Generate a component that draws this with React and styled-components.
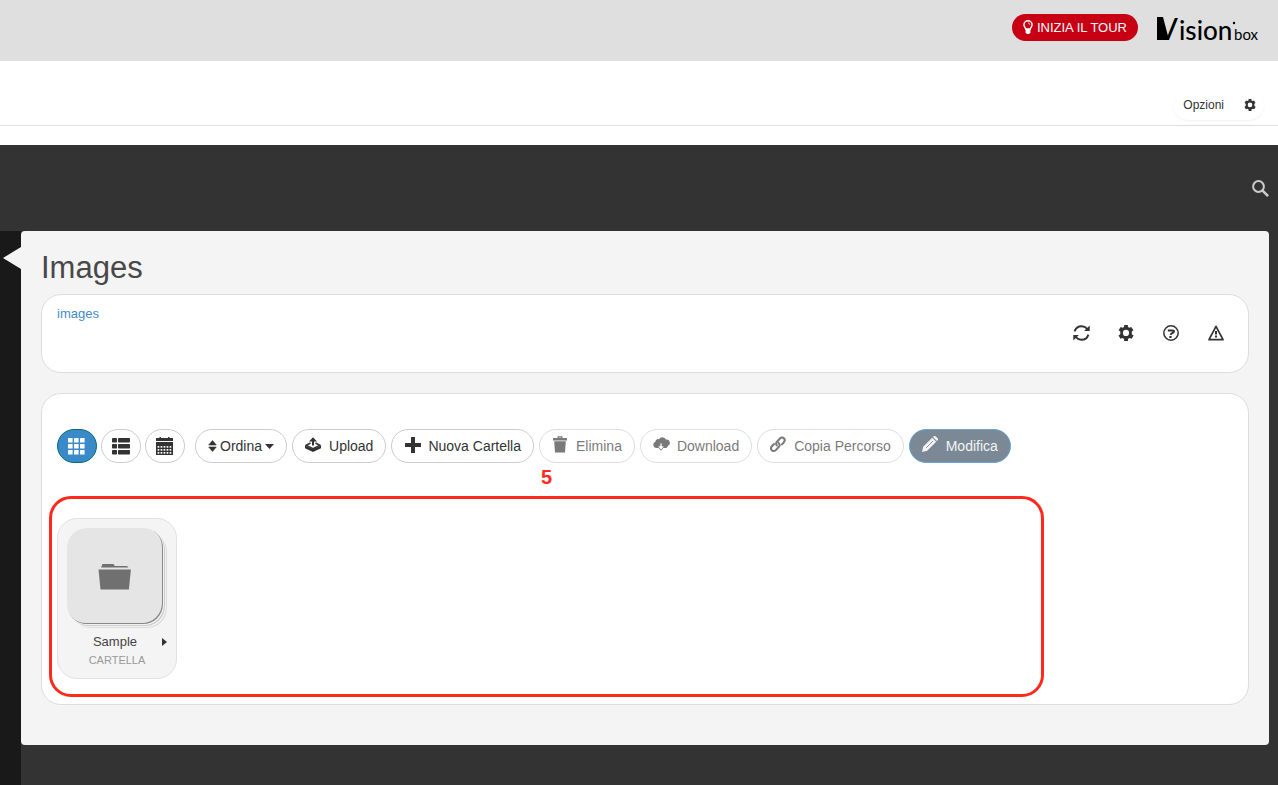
import React from 'react';
import styled, { createGlobalStyle } from 'styled-components';

const GlobalStyle = createGlobalStyle`
  * {
    box-sizing: border-box;
  }
  body {
    margin: 0;
    background: #333;
    font-family: "Liberation Sans", Arial, Helvetica, sans-serif;
    color: #333;
  }
`;

/* icons */

const Icon = ({ w = 18, h = 18, children }) => (
  <svg width={w} height={h} viewBox={`0 0 ${w} ${h}`} fill="currentColor" aria-hidden="true">
    {children}
  </svg>
);

const BulbIcon = () => (
  <Icon w={10} h={15}>
    <path d="M5 .7a4.1 4.1 0 0 0-4.1 4.1c0 1.7 1.6 2.6 1.8 4.4h4.6c.2-1.8 1.8-2.7 1.8-4.4A4.1 4.1 0 0 0 5 .7z" fill="none" stroke="currentColor" strokeWidth="1.4" />
    <path d="M5 3c1 0 1.8.7 1.8 1.6" fill="none" stroke="currentColor" strokeWidth=".9" />
    <path d="M2.6 8.6h4.8v3.6L6.2 14H3.8l-1.2-1.8z" />
  </Icon>
);

const GearIcon = ({ size = 16 }) => (
  <svg width={size} height={size} viewBox="0 0 16 16" fill="currentColor" aria-hidden="true">
    <path
      fillRule="evenodd"
      d="M6.1 0h3.8v1.9l1.6.9 1.8-.8 2.1 3.2-1.6 1.2v2.9l1.8 1.1-2 3.4-2-.8-1.6.9V16H6.1v-2.1l-1.6-.9-2 .8-2-3.4 1.8-1.1V6.4L.6 5.2 2.7 2l1.8.8 1.6-.9zM8 4.8a3.1 3.1 0 1 0 0 6.2 3.1 3.1 0 0 0 0-6.2z"
    />
  </svg>
);

const RefreshIcon = () => (
  <Icon w={17} h={16}>
    <path d="M1.6 6.4C2.6 3.3 5.2 1.2 8.5 1.2c2.3 0 4.3 1 5.6 2.6M15.4 9.6c-1 3.1-3.6 5.2-6.9 5.2-2.3 0-4.3-1-5.6-2.6" fill="none" stroke="currentColor" strokeWidth="1.9" />
    <path d="M16.7.5v5.5h-5.6zM.3 15.500V10h5.6z" />
  </Icon>
);

const HelpIcon = () => (
  <Icon w={16} h={16}>
    <circle cx="8" cy="8" r="7.2" fill="none" stroke="currentColor" strokeWidth="1.5" />
    <path d="M4.8 5.4h4.8c1 0 1.5.6 1.3 1.3-.3 1.2-3 1.2-3.3 3.2" fill="none" stroke="currentColor" strokeWidth="2" />
    <path d="M6.3 11h2.3v2H6.3z" />
  </Icon>
);

const WarningIcon = () => (
  <Icon w={16} h={16}>
    <path d="M8 1.3 15 14.7H1z" fill="none" stroke="currentColor" strokeWidth="1.7" strokeLinejoin="round" />
    <path d="M7 6h2v3.4H7zM7 10.600h2v1.8H7z" />
  </Icon>
);

const SearchIcon = () => (
  <Icon w={17} h={17}>
    <circle cx="6.5" cy="6.5" r="5.4" fill="none" stroke="currentColor" strokeWidth="2" />
    <path d="m10.3 10.3 5.8 5.8" stroke="currentColor" strokeWidth="2.6" />
  </Icon>
);

const GridIcon = () => (
  <Icon>
    {[1, 7, 13].map((y) =>
      [0, 6, 12].map((x) => <rect key={`${x}-${y}`} x={x} y={y} width="4.6" height="4.6" rx=".4" />)
    )}
  </Icon>
);

const ListIcon = () => (
  <Icon>
    {[1, 7, 13].map((y) => (
      <g key={y}>
        <rect x="0" y={y} width="5" height="4.5" rx=".8" />
        <rect x="6" y={y} width="12" height="4.5" rx=".8" />
      </g>
    ))}
  </Icon>
);

const CalendarIcon = () => (
  <Icon>
    <path d="M0 1h3.500V0H5v1h7V0h1.500v1H17v3H0zM0 5h17v13H0z" />
    {[9, 12, 15].map((y) =>
      [1, 4, 7, 10, 13].map((x) => <rect key={`${x}-${y}`} x={x + 0.6} y={y} width="1.700" height="1.700" fill="#fff" />)
    )}
  </Icon>
);

const SortIcon = () => (
  <Icon w={9} h={12}>
    <path d="M4.5.5 8.3 5H.7zM4.5 11.500.7 7h7.6z" stroke="currentColor" strokeWidth=".6" strokeLinejoin="round" />
  </Icon>
);

const CaretIcon = () => (
  <Icon w={9} h={5}>
    <path d="M0 0h9L4.5 5z" />
  </Icon>
);

const UploadIcon = () => (
  <Icon>
    <path d="M8 1.2 12 5.400H9v4.200H7V5.400H4z" />
    <path d="M5.5 7 1.2 9.3 8 12.600l6.800-3.300L10.500 7" fill="none" stroke="currentColor" strokeWidth="1.5" />
    <path d="M0 9.600 8 13l8-3.400v2.600L8 16l-8-3.800z" />
  </Icon>
);

const PlusIcon = () => (
  <Icon>
    <path d="M7 1h4v6h6v4h-6v6H7v-6H1V7h6z" />
  </Icon>
);

const TrashIcon = () => (
  <Icon>
    <path d="M1 2h4.500V.3h5V2H15v2.500H1zM6.900 1.400V2h2.200v-.6zM2.200 5.200h11.600L13 16.500H3z" fillRule="evenodd" />
  </Icon>
);

const CloudIcon = () => (
  <Icon>
    <path d="M3.2 12A3.2 3.2 0 0 1 2.400 5.800a2.700 2.700 0 0 1 3.500-2.600 3.900 3.900 0 0 1 7 .3A3.300 3.300 0 0 1 15 9.700c-.3 1.600-1.600 2.400-3.400 2.300z" />
    <path d="M6.900 7h2.200v3h2.500L8 14.200 4.400 10h2.500z" fill="#fff" stroke="currentColor" strokeWidth=".9" />
  </Icon>
);

const LinkIcon = () => (
  <Icon>
    <g fill="none" stroke="currentColor" strokeWidth="2" strokeLinecap="round">
      <path d="M6.800 9.500c-1.100-1.500-.6-3 .4-4l2.700-3c1.300-1.300 2.900-1.300 4-.2s1.100 2.700-.1 4l-1.800 2.100" />
      <path d="M8.600 6.900c1.400 1.400 1.200 3 .1 4.100l-2.900 3.100c-1.300 1.300-2.900 1.300-4 .2s-1.100-2.700.1-4L4 8" />
    </g>
  </Icon>
);

const PencilIcon = () => (
  <Icon>
    <path d="m0 16 1.200-5.200 9-9 4 4-9 9zM11 1.100l.8-.8c.6-.5 1.300-.5 1.900.1l1.900 1.900c.6.6.6 1.300.1 1.900l-.8.800z" />
    <path d="m4.200 11.800 6.800-6.800" stroke="#7a8995" strokeWidth=".9" />
  </Icon>
);

const FolderIcon = () => (
  <Icon w={34} h={28}>
    <path d="M3 5.500 4.500 2h11l1.300 2H29l1.500 1.500zM.5 7.500h32.400l-2 20H2.500z" />
  </Icon>
);

const Logo = () => (
  <svg width="102" height="55" viewBox="0 0 102 55" role="img" aria-label="Visionbox">
    <path d="M0 17h6l6 23H0z" />
    <LogoText x="0" y="40" $size={31}>V</LogoText>
    <LogoText x="22" y="40" $size={26} $bold>ision</LogoText>
    <circle cx="77" cy="23" r="1.2" />
    <LogoText x="77" y="40" $size={15}>box</LogoText>
  </svg>
);

const headerActions = [
  { label: 'Aggiorna', icon: <RefreshIcon /> },
  { label: 'Impostazioni', icon: <GearIcon /> },
  { label: 'Aiuto', icon: <HelpIcon /> },
  { label: 'Avvisi', icon: <WarningIcon /> },
];

const views = [
  { label: 'Griglia', icon: <GridIcon />, active: true },
  { label: 'Elenco', icon: <ListIcon /> },
  { label: 'Calendario', icon: <CalendarIcon /> },
];

const actions = [
  { label: 'Upload', icon: <UploadIcon /> },
  { label: 'Nuova Cartella', icon: <PlusIcon /> },
  { label: 'Elimina', icon: <TrashIcon />, disabled: true },
  { label: 'Download', icon: <CloudIcon />, disabled: true },
  { label: 'Copia Percorso', icon: <LinkIcon />, disabled: true },
];

const App = () => {
  return (
    <Page>
      <GlobalStyle />
      <TopBar>
        <TourButton type="button">
          <BulbIcon />
          INIZIA IL TOUR
        </TourButton>
        <Logo />
      </TopBar>
      <OptionsBar>
        <OptionsButton type="button">
          Opzioni
          <GearIcon size={12} />
        </OptionsButton>
      </OptionsBar>
      <Workspace>
        <SearchBar>
          <SearchButton type="button" aria-label="Cerca">
            <SearchIcon />
          </SearchButton>
        </SearchBar>
        <Body>
          <Sidebar />
          <Main>
            <Panel>
              <Title>Images</Title>
              <PathCard>
                <PathLink href="#images">images</PathLink>
                <HeaderActions>
                  {headerActions.map(({ label, icon }) => (
                    <IconButton key={label} type="button" aria-label={label}>
                      {icon}
                    </IconButton>
                  ))}
                </HeaderActions>
              </PathCard>
              <FilesCard>
                <Toolbar>
                  <ViewGroup>
                    {views.map(({ label, icon, active }) => (
                      <ViewButton key={label} type="button" aria-label={label} $active={active}>
                        {icon}
                      </ViewButton>
                    ))}
                  </ViewGroup>
                  <SortButton type="button">
                    <SortIcon />
                    Ordina
                    <CaretIcon />
                  </SortButton>
                  {actions.map(({ label, icon, disabled }) => (
                    <ActionButton key={label} type="button" disabled={disabled}>
                      {icon}
                      {label}
                    </ActionButton>
                  ))}
                  <EditButton type="button">
                    <PencilIcon />
                    Modifica
                  </EditButton>
                </Toolbar>
                <Gallery>
                  <FolderCard>
                    <Thumb>
                      <FolderIcon />
                    </Thumb>
                    <FolderName>
                      Sample
                      <Expand type="button" aria-label="Apri menu" />
                    </FolderName>
                    <FolderType>CARTELLA</FolderType>
                  </FolderCard>
                  <Highlight>
                    <HighlightNumber>5</HighlightNumber>
                  </Highlight>
                </Gallery>
              </FilesCard>
            </Panel>
          </Main>
        </Body>
      </Workspace>
    </Page>
  );
};

export default App;

const Page = styled.div`
  display: flex;
  flex-direction: column;
  min-height: 100vh;
`;

const TopBar = styled.header`
  display: flex;
  justify-content: flex-end;
  align-items: center;
  gap: 19px;
  padding: 0 19px 6px;
  background: #dfdfdf;
`;

const TourButton = styled.button`
  display: flex;
  align-items: center;
  gap: 4px;
  height: 27px;
  padding: 0 11px;
  border: 0;
  border-radius: 14px;
  background: #c70014;
  color: #fff;
  font-family: inherit;
  font-size: 13px;
  cursor: pointer;
`;

const LogoText = styled.text`
  font-family: Lato, sans-serif;
  font-size: ${({ $size }) => $size}px;
  font-weight: ${({ $bold }) => ($bold ? 500 : 400)};
`;

const OptionsBar = styled.div`
  display: flex;
  justify-content: flex-end;
  padding: 29px 14px 5px;
  background: #fff;
  border-bottom: 1px solid #ddd;
`;

const OptionsButton = styled.button`
  display: flex;
  align-items: center;
  gap: 20px;
  height: 30px;
  padding: 0 8px 0 10px;
  border: 0;
  border-radius: 15px;
  background: #fff;
  box-shadow: 0 1px 2px rgba(0, 0, 0, 0.06);
  color: #333;
  font-family: inherit;
  font-size: 12px;
  cursor: pointer;
`;

const Workspace = styled.div`
  flex: 1;
  display: flex;
  flex-direction: column;
  border-top: 19px solid #fff;
  background: #333;
`;

const SearchBar = styled.div`
  display: flex;
  justify-content: flex-end;
  align-items: center;
  height: 86px;
  padding: 0 9px;
`;

const SearchButton = styled.button`
  display: flex;
  padding: 0;
  border: 0;
  background: none;
  color: #ccc;
  cursor: pointer;
`;

const Body = styled.div`
  flex: 1;
  display: flex;
`;

const Sidebar = styled.aside`
  width: 21px;
  background: #191919;
`;

const Main = styled.main`
  flex: 1;
  min-width: 0;
  padding: 0 9px 40px 0;
`;

const Panel = styled.section`
  position: relative;
  padding: 20px 20px 40px;
  border-radius: 4px;
  background: #f4f4f4;

  &::before {
    content: "";
    position: absolute;
    top: 16px;
    left: -18px;
    border: solid transparent;
    border-width: 11px 18px 11px 0;
    border-right-color: #f4f4f4;
  }
`;

const Title = styled.h1`
  margin: 0 0 9px;
  color: #484848;
  font-size: 31px;
  font-weight: 500;
  line-height: 34px;
`;

const Card = styled.div`
  border: 1px solid #ddd;
  border-radius: 20px;
  background: #fff;
`;

const PathCard = styled(Card)`
  display: flex;
  justify-content: space-between;
  align-items: flex-start;
  padding: 11px 10px 17px 15px;
  margin-bottom: 20px;
`;

const PathLink = styled.a`
  color: #428bca;
  font-size: 13px;
  line-height: 16px;
  text-decoration: none;
`;

const HeaderActions = styled.div`
  display: flex;
  gap: 1px;
  padding-top: 5px;
`;

const IconButton = styled.button`
  display: flex;
  align-items: center;
  justify-content: center;
  width: 44px;
  height: 44px;
  padding: 0;
  border: 0;
  background: none;
  color: #333;
  cursor: pointer;
`;

const FilesCard = styled(Card)`
  padding: 35px 15px 25px;
`;

const Toolbar = styled.div`
  display: flex;
  flex-wrap: wrap;
  gap: 5px;
  margin-bottom: 55px;
`;

const ViewGroup = styled.div`
  display: flex;
  gap: 4px;
  margin-right: 5px;
`;

const PillButton = styled.button`
  display: flex;
  align-items: center;
  height: 34px;
  padding: 0 12px;
  border: 1px solid #ccc;
  border-radius: 17px;
  background: #fff;
  color: #333;
  font-family: inherit;
  font-size: 14px;
  white-space: nowrap;
  cursor: pointer;

  &:disabled {
    opacity: 0.65;
    cursor: not-allowed;
  }
`;

const ViewButton = styled(PillButton)`
  justify-content: center;
  width: 40px;
  padding: 0;
  border-color: ${({ $active }) => ($active ? '#0a6e6e' : '#ccc')};
  background: ${({ $active }) => ($active ? '#3a8aca' : '#fff')};
  color: ${({ $active }) => ($active ? '#fff' : '#333')};
`;

const SortButton = styled(PillButton)`
  gap: 3px;
`;

const ActionButton = styled(PillButton)`
  gap: 6px;

  svg {
    margin-bottom: 2px;
  }
`;

const EditButton = styled(ActionButton)`
  border-color: #6aa5d4;
  background: #7a8995;
  color: #f4f4f4;
`;

const Gallery = styled.div`
  position: relative;
  display: flex;
  flex-wrap: wrap;
  gap: 10px;
`;

const FolderCard = styled.article`
  width: 120px;
  padding: 9px 9px 10px;
  border: 1px solid #e2e2e2;
  border-radius: 20px;
  background: #f4f4f4;
`;

const Thumb = styled.div`
  display: flex;
  align-items: center;
  justify-content: center;
  width: 96px;
  height: 96px;
  border-radius: 20px;
  background: #e5e5e5;
  color: #707070;
  box-shadow: inset -1px -1px 0 #888, 1px 1px 0 #f4f4f4, 2px 2px 0 #ccc, 3px 3px 0 #f4f4f4, 4px 4px 0 #ddd;
`;

const FolderName = styled.div`
  display: flex;
  justify-content: center;
  align-items: center;
  position: relative;
  padding-right: 4px;
  margin-top: 8px;
  color: #444;
  font-size: 13px;
  line-height: 20px;
`;

const Expand = styled.button`
  position: absolute;
  right: 0;
  width: 0;
  height: 0;
  padding: 0;
  border: solid transparent;
  border-width: 4px 0 4px 5px;
  border-left-color: #333;
  background: none;
  cursor: pointer;
`;

const FolderType = styled.div`
  color: #999;
  font-size: 11px;
  line-height: 16px;
  text-align: center;
`;

const Highlight = styled.div`
  position: absolute;
  inset: -22px 189px -18px -8px;
  border: 3px solid #ff2a1c;
  border-radius: 22px;
  pointer-events: none;
`;

const HighlightNumber = styled.span`
  position: absolute;
  top: -34px;
  left: 0;
  right: 0;
  color: #ff2a1c;
  font-size: 20px;
  font-weight: 700;
  line-height: 24px;
  text-align: center;
`;
